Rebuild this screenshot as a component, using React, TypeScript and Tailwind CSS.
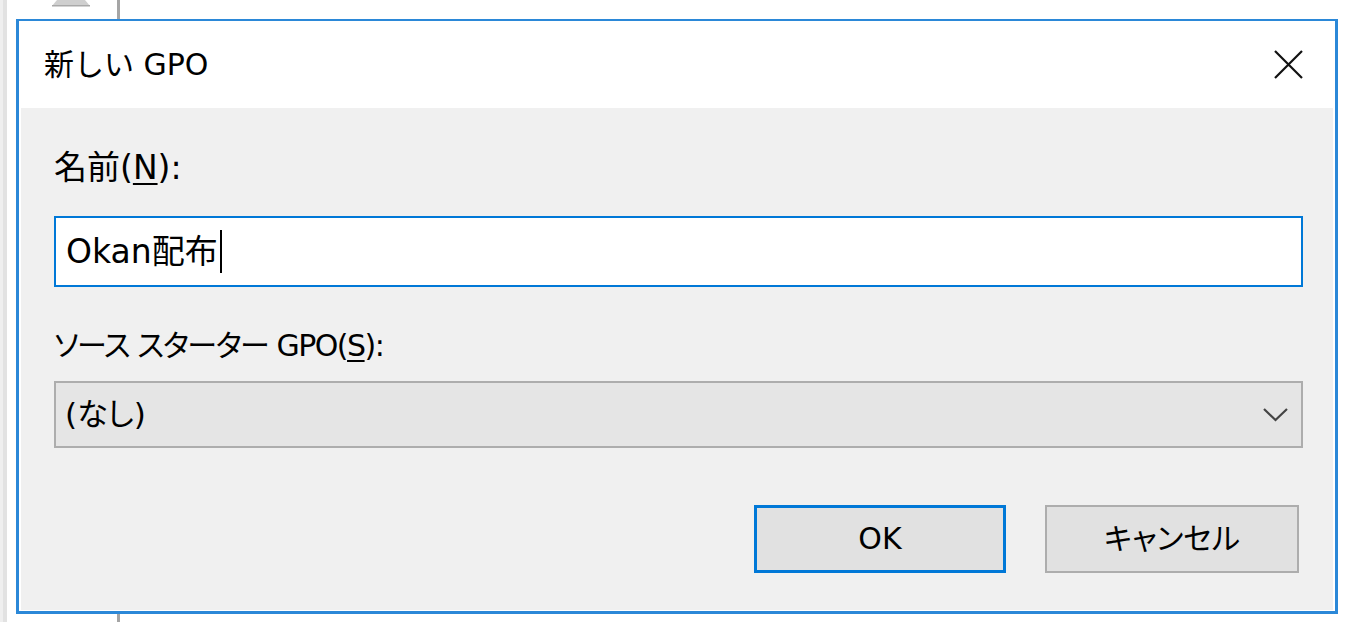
import React from "react";

const font = "font-['DejaVu_Sans','Noto_Sans_CJK_JP',sans-serif]";
const palt = "[font-feature-settings:'palt']";

export default function App() {
  return (
    <div className={`relative w-[1366px] h-[622px] bg-white overflow-hidden ${font} text-[#000]`}>
      {/* desktop background bits */}
      <div className="absolute left-0 top-0 h-full w-[3px] bg-[#efefef]" />
      <div className="absolute left-[3px] top-0 h-full w-[4px] bg-[#e2e2e2]" />
      <div className="absolute left-[117px] top-0 h-full w-[3px] bg-[#a5a5a5]" />
      <svg className="absolute left-[50px] top-0" width="42" height="8" viewBox="0 0 42 8">
        <polygon points="7,0 35,0 40,6 2,6" fill="#cfcfcf" />
        <rect x="2" y="5" width="38" height="1.5" fill="#a9a9a9" />
      </svg>

      <div className="relative pl-[16px] pt-[19px]">
        <div className="w-[1322px] h-[595px] border-[3px] border-t-2 border-[#2b88d8] bg-white flex flex-col">
          {/* title bar */}
          <div className="h-[87px] flex items-center justify-between pl-[25px] pr-[32px] shrink-0">
            <span className="text-[30px] leading-none">新しい GPO</span>
            <svg width="29" height="29" viewBox="0 0 29 29">
              <path d="M1 1 L28 28 M28 1 L1 28" stroke="#111" strokeWidth="2.2" fill="none" />
            </svg>
          </div>
          {/* body */}
          <div className="flex-1 bg-[#f0f0f0] mx-[2px] mb-[1px] pl-[33px] pr-[30px] pt-[42px] flex flex-col">
            <div className="text-[33px] leading-[36px]">
              名前(<span className="underline underline-offset-[4px] decoration-[2px]">N</span>):
            </div>
            <div className="mt-[30px] h-[71px] border-2 border-[#0078d7] bg-white flex items-center pl-[10px]">
              <span className="text-[33px] leading-none">Okan配布</span>
              <span className="ml-[2px] w-[2px] h-[43px] bg-black" />
            </div>
            <div className={`mt-[41px] text-[30px] leading-[36px] tracking-[-1.5px] ${palt}`}>
              ソース スターター GPO(<span className="underline underline-offset-[4px] decoration-[2px]">S</span>):
            </div>
            <div className="mt-[17px] h-[67px] border-2 border-[#adadad] bg-[#e5e5e5] flex items-center justify-between pl-[9px] pr-[13px]">
              <span className={`text-[31px] leading-none ${palt}`}>(なし)</span>
              <svg width="25" height="15" viewBox="0 0 25 15">
                <polyline points="1,2 12.5,13 24,2" stroke="#444" strokeWidth="2.2" fill="none" />
              </svg>
            </div>
            <div className="mt-[57px] flex justify-end gap-[39px] mr-[4px]">
              <button className="w-[252px] h-[68px] border-[3px] border-[#0078d7] bg-[#e1e1e1] text-[30px] leading-none">
                OK
              </button>
              <button className={`w-[254px] h-[68px] border-2 border-[#adadad] bg-[#e1e1e1] text-[30px] leading-none ${palt}`}>
                キャンセル
              </button>
            </div>
          </div>
        </div>
      </div>
    </div>
  );
}
